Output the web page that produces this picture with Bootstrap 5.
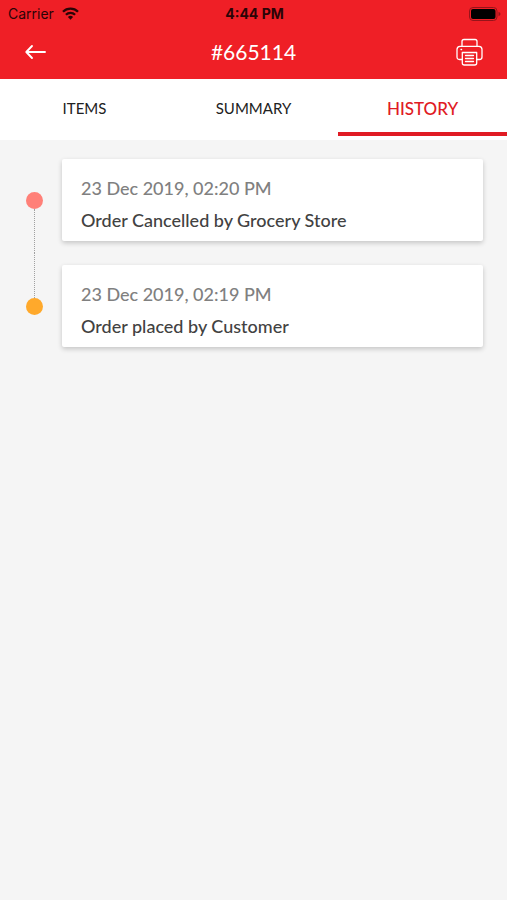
<!DOCTYPE html>
<html lang="en">
<head>
<meta charset="utf-8">
<meta name="viewport" content="width=device-width, initial-scale=1">
<title>Order #665114</title>
<link rel="stylesheet" href="https://cdn.jsdelivr.net/npm/bootstrap@5.3.0/dist/css/bootstrap.min.css">
<style>
body { font-family: Lato, sans-serif; background: #f5f5f5; color: #424242; }
.app-top { background: #ef1f26; }
.status-bar { font: 14px/27px Inter, "Liberation Sans", sans-serif; color: #2b0406; padding: 0 6px 0 8px; }
.status-bar .clock { font-weight: 700; }
.title-bar { height: 52px; padding: 0 24px 2px; }
.title-bar h1 { font-size: 21px; line-height: 28px; color: #fff; }
.icon-btn { line-height: 0; color: #fff; }
.order-tabs { background: #fff; height: 61px; padding-bottom: 4px; }
.order-tabs .nav-link { height: 57px; padding: 6px 0 0; border: 0; border-bottom: 4px solid transparent; border-radius: 0; background: none; color: #212121; font-size: 15px; }
.order-tabs .nav-link.active { color: #e01b24; border-color: #e01b24; background: none; font-size: 17px; font-weight: 500; }
.timeline { padding: 7px 24px 0 26px; }
.rail { width: 17px; margin-right: 19px; }
.dot { width: 17px; height: 17px; }
.dot-cancelled { background: #ff8078; }
.dot-placed { background: #ffa92b; }
.rail-line { width: 0; border-left: 1px dotted #a0a0a0; }
.rail-gap { border-color: transparent; }
.event-card { margin: 12px 0; padding: 13px 19px 5px; border: 0; border-radius: 2px; box-shadow: 0 2px 5px rgba(0,0,0,.2); font-size: 18px; line-height: 32px; font-weight: 500; }
.event-card time { color: #808080; }
</style>
<script src="https://cdn.jsdelivr.net/npm/bootstrap@5.3.0/dist/js/bootstrap.bundle.min.js"></script>
</head>
<body>
<header class="app-top">
  <div class="status-bar row g-0 align-items-center">
    <div class="col d-flex align-items-center gap-2">
      <span>Carrier</span>
      <svg width="17" height="13" viewBox="0 0 17 13" fill="none" stroke="currentColor" stroke-width="2.3" aria-label="Wi-Fi" role="img"><path d="M1 4.7a10.6 10.6 0 0 1 15 0M3.9 7.7a6.5 6.5 0 0 1 9.2 0"/><path d="M8.500 12.700 5.900 10a3.700 3.700 0 0 1 5.200 0z" fill="currentColor" stroke="none"/></svg>
    </div>
    <div class="col-auto clock">4:44 PM</div>
    <div class="col d-flex justify-content-end">
      <svg width="32" height="14" viewBox="0 0 32 14" role="img" aria-label="Battery full"><rect x=".5" y=".5" width="27.500" height="13" rx="3.500" fill="none" stroke="#96141a"/><rect x="2" y="2" width="24.500" height="10" rx="2" fill="#000"/><path d="M29.500 4.700q2 .7 2 2.300t-2 2.300z" fill="#96141a"/></svg>
    </div>
  </div>
  <div class="title-bar row g-0 align-items-center">
    <div class="col d-flex">
      <button type="button" class="btn p-0 border-0 icon-btn" aria-label="Back">
        <svg width="22" height="16" viewBox="0 0 22 16" fill="none" stroke="currentColor" stroke-width="1.900" stroke-linecap="round" stroke-linejoin="round"><path d="M21 8H2.500M8 2 2.300 8 8 14"/></svg>
      </button>
    </div>
    <h1 class="col-auto fw-normal m-0">#665114</h1>
    <div class="col d-flex justify-content-end">
      <button type="button" class="btn p-0 border-0 icon-btn" aria-label="Print">
        <svg width="27" height="28" viewBox="0 0 27 28" fill="none" stroke="currentColor" stroke-width="1.300" stroke-linejoin="round" stroke-linecap="round"><path d="M6 8V3.500Q6 1.500 8 1.500h11q2 0 2 2V8"/><path d="M6.200 21.500H3.500q-2.500 0-2.500-2.500v-7.500Q1 8.300 4 8.300h19q3 0 3 3.200V19q0 2.500-2.500 2.500h-2.700"/><path d="M6.300 14.500h14.400V25q0 2-2 2H8.300q-2 0-2-2z"/><path d="M9.500 17.500h8M9.500 20.500h8M9.500 23.500h8M5 11.500h.6"/></svg>
      </button>
    </div>
  </div>
</header>
<div class="nav nav-fill nav-justified order-tabs" role="tablist">
  <button type="button" class="nav-link nav-item" role="tab" aria-selected="false">ITEMS</button>
  <button type="button" class="nav-link nav-item" role="tab" aria-selected="false">SUMMARY</button>
  <button type="button" class="nav-link nav-item active" role="tab" aria-selected="true">HISTORY</button>
</div>
<main class="timeline">
  <ol class="list-unstyled m-0">
    <li class="d-flex">
      <div class="rail d-flex flex-column align-items-center">
        <span class="rail-line rail-gap flex-fill"></span>
        <span class="dot dot-cancelled rounded-circle"></span>
        <span class="rail-line flex-fill"></span>
      </div>
      <div class="card event-card flex-fill">
        <time datetime="2019-12-23T14:20">23 Dec 2019, 02:20 PM</time>
        <span>Order Cancelled by Grocery Store</span>
      </div>
    </li>
    <li class="d-flex">
      <div class="rail d-flex flex-column align-items-center">
        <span class="rail-line flex-fill"></span>
        <span class="dot dot-placed rounded-circle"></span>
        <span class="rail-line rail-gap flex-fill"></span>
      </div>
      <div class="card event-card flex-fill">
        <time datetime="2019-12-23T14:19">23 Dec 2019, 02:19 PM</time>
        <span>Order placed by Customer</span>
      </div>
    </li>
  </ol>
</main>
</body>
</html>
